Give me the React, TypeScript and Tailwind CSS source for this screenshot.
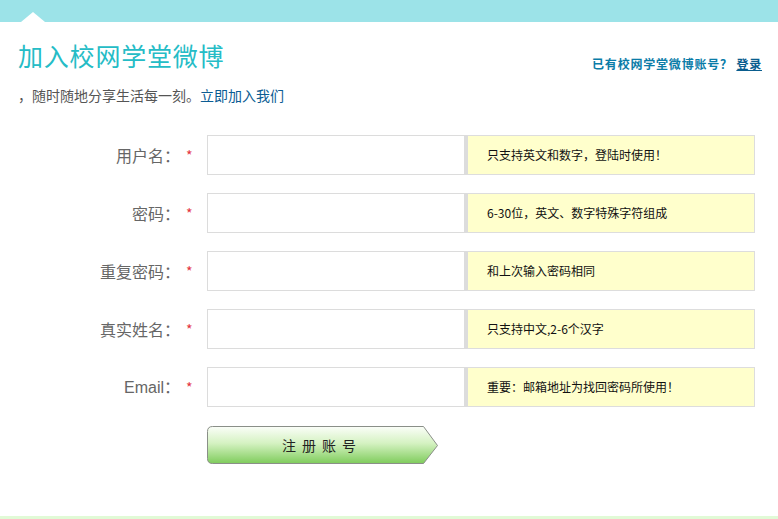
import React from 'react';

const rows = [
  { label: '用户名：', hint: '只支持英文和数字，登陆时使用！' },
  { label: '密码：', hint: '6-30位，英文、数字特殊字符组成' },
  { label: '重复密码：', hint: '和上次输入密码相同' },
  { label: '真实姓名：', hint: '只支持中文,2-6个汉字' },
  { label: 'Email：', hint: '重要：邮箱地址为找回密码所使用！' },
];

export default function App() {
  return (
    <div className="relative w-[778px] h-[519px] bg-white overflow-hidden font-['Noto_Sans_CJK_SC',sans-serif]">
      {/* top bar with notch */}
      <div className="relative h-[22px] bg-[#9ce3e8]">
        <svg className="absolute left-[21px] top-[12px]" width="24" height="10" viewBox="0 0 24 10">
          <polygon points="0,10 12,0 24,10" fill="#fff" />
        </svg>
      </div>

      <div className="flex justify-between items-start pl-[18px] pr-[16px]">
        <div>
          <h1 className="mt-[17px] text-[25px] leading-[32px] text-[#25bcc6] tracking-[0.8px]">加入校网学堂微博</h1>
          <p className="mt-[15px] text-[14px] leading-[18px] text-[#555]">
            ，随时随地分享生活每一刻。<a className="text-[#0b5c93]">立即加入我们</a>
          </p>
        </div>
        <div className="mt-[34px] text-[12px] font-bold leading-[16px] tracking-[0.8px] text-[#0a7ca8]">
          已有校网学堂微博账号？ <a className="text-[#0a5d8e] underline">登录</a>
        </div>
      </div>

      <div className="mt-[31px] flex flex-col gap-[18px]">
        {rows.map((r) => (
          <div key={r.label} className="flex items-center h-[40px]">
            <div className="w-[180px] text-right text-[16px] text-[#666]">
              {r.label === 'Email：' ? <span className="font-['Liberation_Sans','Noto_Sans_CJK_SC',sans-serif]">{r.label}</span> : r.label}
            </div>
            <div className="w-[27px] pl-[6px] text-[14px] text-[#e4343f]">*</div>
            <div className="w-[258px] h-[40px] border border-[#dcdcdc] bg-white" />
            <div className="w-[290px] h-[40px] border border-[#dddddd] border-l-[3px] border-l-[#dcdcdc] bg-[#ffffcc] flex items-center pl-[19px] text-[12px] text-[#111]">
              {r.hint}
            </div>
          </div>
        ))}
      </div>

      <div className="mt-[19px] ml-[207px] relative w-[232px] h-[40px]">
        <svg className="absolute inset-0" width="232" height="40" viewBox="0 0 232 40">
          <defs>
            <linearGradient id="g" x1="0" y1="0" x2="0" y2="1">
              <stop offset="0" stopColor="#fbfef9" />
              <stop offset="0.45" stopColor="#d5f2c2" />
              <stop offset="1" stopColor="#7fcc5c" />
            </linearGradient>
          </defs>
          <path d="M5.5 0.5 H216.5 L230.5 19.5 L216.5 37.5 H5.5 Q0.5 37.5 0.5 32.5 V5.5 Q0.5 0.5 5.5 0.5 Z" fill="url(#g)" stroke="#8a8f88" />
        </svg>
        <div className="absolute left-0 top-0 w-[230px] h-[38px] flex items-center justify-center text-[14px] tracking-[6px] text-[#222]">注册账号</div>
      </div>

      <div className="absolute left-0 bottom-0 w-full h-[3px] bg-[#e1fad6]" />
    </div>
  );
}
